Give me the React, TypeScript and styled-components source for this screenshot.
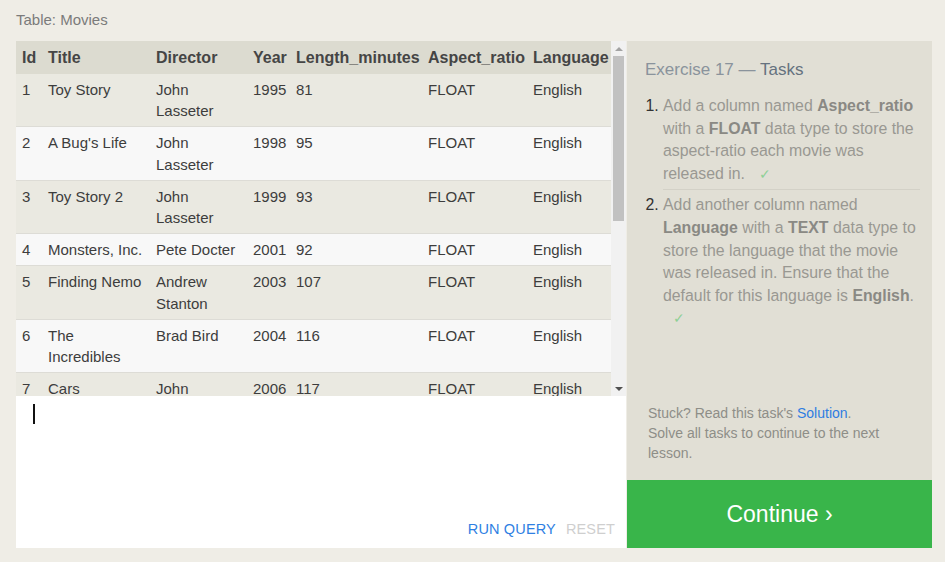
import React from "react";
import styled, { createGlobalStyle } from "styled-components";

const Global = createGlobalStyle`
  html, body { margin: 0; padding: 0; background: #efede6; }
  body { font-family: "Liberation Sans", Arial, sans-serif; }
`;

const Page = styled.div`
  width: 945px;
  height: 562px;
  box-sizing: border-box;
  padding: 10px 13px 14px 16px;
  display: flex;
  flex-direction: column;
`;

const Caption = styled.div`
  font-size: 15px;
  line-height: 20px;
  color: #7b7b7b;
  height: 31px;
`;

const Main = styled.div`
  display: flex;
  flex: 1;
  gap: 1px;
  min-height: 0;
`;

const LeftCol = styled.div`
  width: 610px;
  display: flex;
  flex-direction: column;
`;

const TableArea = styled.div`
  height: 355px;
  display: flex;
`;

const TableViewport = styled.div`
  width: 595px;
  overflow: hidden;
  background: #f8f8f8;
`;

const Scrollbar = styled.div`
  width: 15px;
  background: #f1f1f1;
  display: flex;
  flex-direction: column;
  align-items: center;
`;

const Arrow = styled.div<{ $down?: boolean }>`
  height: 15px;
  width: 15px;
  display: flex;
  align-items: center;
  justify-content: center;
  &::before {
    content: "";
    border-left: 4px solid transparent;
    border-right: 4px solid transparent;
    ${(p) =>
      p.$down
        ? "border-top: 4px solid #505050;"
        : "border-bottom: 4px solid #a3a3a3;"}
  }
`;

const Track = styled.div`
  flex: 1;
  width: 100%;
  display: flex;
  justify-content: center;
`;

const Thumb = styled.div`
  width: 11px;
  height: 165px;
  background: #c1c1c1;
`;

const Table = styled.table`
  width: 595px;
  border-collapse: separate;
  border-spacing: 0;
  table-layout: fixed;
  font-size: 15px;
  line-height: 21.2px;
  color: #3d3d3d;
`;

const Th = styled.th<{ $w: number }>`
  box-sizing: border-box;
  width: ${(p) => p.$w}px;
  text-align: left;
  font-weight: bold;
  font-size: 16px;
  padding: 6px 0 6px 6px;
  line-height: 21px;
  background: #dcdbd0;
  color: #454545;
  white-space: nowrap;
  overflow: hidden;
`;

const Tr = styled.tr<{ $odd: boolean }>`
  background: ${(p) => (p.$odd ? "#eae9e1" : "#f8f8f8")};
`;

const Td = styled.td`
  box-sizing: border-box;
  padding: 5px 4px 5px 6px;
  vertical-align: top;
  border-bottom: 1px solid #dddcd6;
`;

const Editor = styled.div`
  flex: 1;
  background: #ffffff;
  display: flex;
  flex-direction: column;
  justify-content: space-between;
  padding: 8px 11px 10px 17px;
`;

const Cursor = styled.div`
  width: 2px;
  height: 20px;
  background: #111;
`;

const Actions = styled.div`
  display: flex;
  justify-content: flex-end;
  gap: 10px;
  font-size: 14.5px;
  line-height: 18px;
`;

const ActionBtn = styled.span<{ $active: boolean }>`
  color: ${(p) => (p.$active ? "#2f7fe3" : "#cfcfcf")};
  letter-spacing: 0.15px;
`;

const RightCol = styled.div`
  width: 305px;
  background: #e1dfd5;
  display: flex;
  flex-direction: column;
`;

const TasksBox = styled.div`
  flex: 1;
  padding: 18px 12px 0 18px;
`;

const Heading = styled.div`
  font-size: 17px;
  line-height: 22px;
  color: #8a939c;
  margin-bottom: 14px;
`;

const HeadingStrong = styled.span`
  color: #65727f;
`;

const TaskList = styled.ol`
  margin: 0;
  padding: 0 0 0 18px;
  font-size: 15.85px;
  line-height: 22.6px;
  color: #999892;
  li::marker { color: #333; }
`;

const Task = styled.li<{ $last?: boolean }>`
  padding: 0 0 ${(p) => (p.$last ? 0 : 4)}px 0;
  margin-bottom: 4px;
  border-bottom: ${(p) => (p.$last ? "none" : "1px solid #d3d1c7")};
`;

const B = styled.b`
  color: #8a8984;
`;

const Check = styled.span`
  display: inline-block;
  margin-left: 10px;
  color: #8ed096;
  font-size: 14px;
`;

const Hint = styled.div`
  padding: 0 20px 17px 21px;
  font-size: 14px;
  line-height: 20px;
  color: #8e8e88;
`;

const Link = styled.span`
  color: #2f7de1;
`;

const Continue = styled.div`
  height: 68px;
  background: #39b54a;
  color: #fff;
  font-size: 23px;
  display: flex;
  align-items: center;
  justify-content: center;
`;

const cols: [string, number][] = [
  ["Id", 26],
  ["Title", 108],
  ["Director", 97],
  ["Year", 43],
  ["Length_minutes", 132],
  ["Aspect_ratio", 105],
  ["Language", 84],
];

const movies: [number, string, string, number, number][] = [
  [1, "Toy Story", "John Lasseter", 1995, 81],
  [2, "A Bug's Life", "John Lasseter", 1998, 95],
  [3, "Toy Story 2", "John Lasseter", 1999, 93],
  [4, "Monsters, Inc.", "Pete Docter", 2001, 92],
  [5, "Finding Nemo", "Andrew Stanton", 2003, 107],
  [6, "The Incredibles", "Brad Bird", 2004, 116],
  [7, "Cars", "John Lasseter", 2006, 117],
  [8, "Ratatouille", "Brad Bird", 2007, 115],
  [9, "WALL-E", "Andrew Stanton", 2008, 104],
  [10, "Up", "Pete Docter", 2009, 101],
  [11, "Toy Story 3", "Lee Unkrich", 2010, 103],
  [12, "Cars 2", "John Lasseter", 2011, 120],
  [13, "Brave", "Brenda Chapman", 2012, 102],
  [14, "Monsters University", "Dan Scanlon", 2013, 110],
];

export default function App() {
  return (
    <>
      <Global />
      <Page>
        <Caption>Table: Movies</Caption>
        <Main>
          <LeftCol>
            <TableArea>
              <TableViewport>
                <Table>
                  <thead>
                    <tr>
                      {cols.map(([c, w]) => (
                        <Th key={c} $w={w}>
                          {c}
                        </Th>
                      ))}
                    </tr>
                  </thead>
                  <tbody>
                    {movies.map((m, i) => (
                      <Tr key={m[0]} $odd={i % 2 === 0}>
                        <Td>{m[0]}</Td>
                        <Td>{m[1]}</Td>
                        <Td>{m[2]}</Td>
                        <Td>{m[3]}</Td>
                        <Td>{m[4]}</Td>
                        <Td>FLOAT</Td>
                        <Td>English</Td>
                      </Tr>
                    ))}
                  </tbody>
                </Table>
              </TableViewport>
              <Scrollbar>
                <Arrow />
                <Track>
                  <Thumb />
                </Track>
                <Arrow $down />
              </Scrollbar>
            </TableArea>
            <Editor>
              <Cursor />
              <Actions>
                <ActionBtn $active>RUN QUERY</ActionBtn>
                <ActionBtn $active={false}>RESET</ActionBtn>
              </Actions>
            </Editor>
          </LeftCol>
          <RightCol>
            <TasksBox>
              <Heading>
                Exercise 17 — <HeadingStrong>Tasks</HeadingStrong>
              </Heading>
              <TaskList>
                <Task>
                  Add a column named <B>Aspect_ratio</B> with a <B>FLOAT</B> data type to store the
                  aspect-ratio each movie was released in. <Check>✓</Check>
                </Task>
                <Task $last>
                  Add another column named <B>Language</B> with a <B>TEXT</B> data type to store the
                  language that the movie was released in. Ensure that the default for this language
                  is <B>English</B>. <Check>✓</Check>
                </Task>
              </TaskList>
            </TasksBox>
            <Hint>
              Stuck? Read this task's <Link>Solution</Link>.
              <br />
              Solve all tasks to continue to the next lesson.
            </Hint>
            <Continue>Continue ›</Continue>
          </RightCol>
        </Main>
      </Page>
    </>
  );
}
